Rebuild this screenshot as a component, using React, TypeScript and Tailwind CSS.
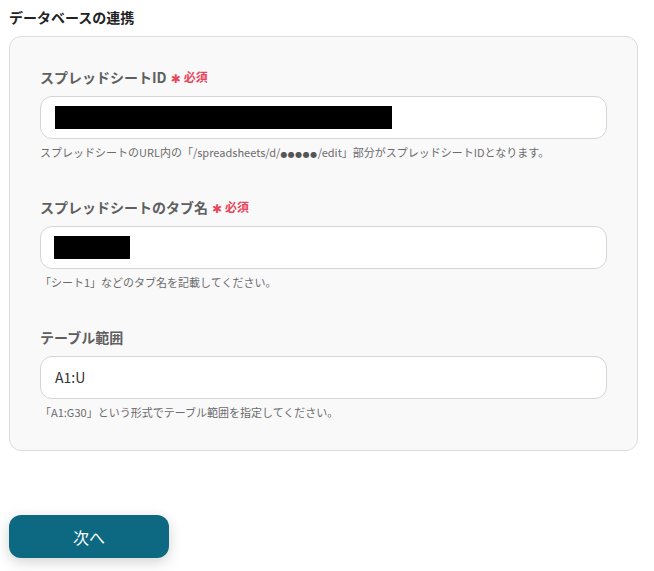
import React from "react";

const FONT = {
  fontFamily: '"Noto Sans CJK JP", "Noto Sans", sans-serif',
};

function RequiredMark() {
  return (
    <span className="ml-[4px] inline-flex items-center text-[#e8455b]">
      <span className="mt-[3px] font-['DejaVu_Sans'] text-[12px] font-bold leading-none">✱</span>
      <span className="ml-[3px] text-[12px] font-bold">必須</span>
    </span>
  );
}

function Field({
  label,
  required,
  help,
  children,
}: {
  label: string;
  required?: boolean;
  help: React.ReactNode;
  children: React.ReactNode;
}) {
  return (
    <div>
      <div className="flex h-[20px] items-center text-[14px] font-bold text-[#5f5f5f]">
        {label}
        {required ? <RequiredMark /> : null}
      </div>
      <div className="mt-[9px] flex h-[43px] items-center rounded-[12px] border border-[#d2d5da] bg-white px-[14px]">
        {children}
      </div>
      <p className="mt-[5px] h-[16px] text-[11px] leading-[16px] text-[#6b6b6b]">{help}</p>
    </div>
  );
}

export default function App() {
  return (
    <div className="min-h-screen bg-white pl-[9px] pr-[16px] pt-[7px]" style={FONT}>
      <h1 className="text-[14px] font-bold leading-[20px] text-[#222]">データベースの連携</h1>

      <section className="mt-[9px] flex flex-col gap-[37px] rounded-[12px] border border-[#dcdde1] bg-[#f9f9fa] px-[30px] pb-[30px] pt-[30px]">
        <Field
          label="スプレッドシートID"
          required
          help={
            <>
              スプレッドシートのURL内の「/spreadsheets/d/
              <span className="font-['DejaVu_Sans'] text-[8px] tracking-[0.5px] text-[#555]">●●●●●</span>
              /edit」部分がスプレッドシートIDとなります。
            </>
          }
        >
          <div className="h-[23px] w-[337px] bg-black" />
        </Field>

        <Field
          label="スプレッドシートのタブ名"
          required
          help="「シート1」などのタブ名を記載してください。"
        >
          <div className="-ml-px h-[23px] w-[76px] bg-black" />
        </Field>

        <Field
          label="テーブル範囲"
          help="「A1:G30」という形式でテーブル範囲を指定してください。"
        >
          <span className="text-[14px] text-[#333]">A1:U</span>
        </Field>
      </section>

      <button
        type="button"
        className="mt-[64px] flex h-[43px] w-[160px] items-center justify-center rounded-[12px] bg-[#0c6981] text-[16px] text-white shadow-[0_4px_14px_rgba(0,0,0,0.18)]"
      >
        次へ
      </button>
    </div>
  );
}
